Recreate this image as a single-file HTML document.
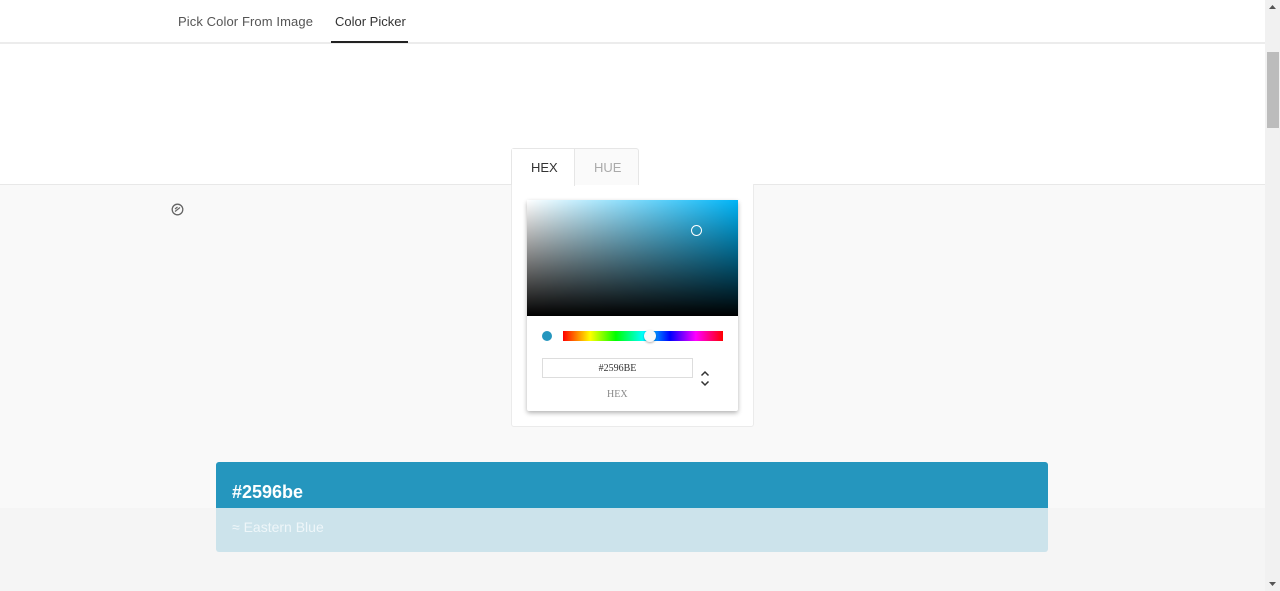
<!DOCTYPE html>
<html><head><style>
body{margin:0;width:1280px;height:591px;overflow:hidden;position:relative;font-family:"Liberation Sans",sans-serif;background:#f5f5f5}
.a{position:absolute}
</style></head><body>
<div class="a" style="left:0;top:0;width:1265px;height:185px;background:#fff"></div>
<div class="a" style="left:0;top:42px;width:1265px;height:2px;background:#ececec"></div>
<div class="a" style="left:0;top:184px;width:1265px;height:1px;background:#e8e8e8"></div>
<div class="a" style="left:0;top:185px;width:1265px;height:323px;background:#f9f9f9"></div>
<div class="a" style="left:178px;top:14px;font-size:13px;color:#555;letter-spacing:0.1px">Pick Color From Image</div>
<div class="a" style="left:335px;top:14px;font-size:13px;color:#333">Color Picker</div>
<div class="a" style="left:331px;top:41px;width:77px;height:2px;background:#222"></div>
<svg class="a" style="left:171px;top:203px" width="13" height="13" viewBox="0 0 13 13"><circle cx="6.5" cy="6.5" r="5.3" fill="none" stroke="#666" stroke-width="1.3"/><path d="M4 8.5L9 4.5M4 6L6.5 4" stroke="#666" stroke-width="1.2" fill="none"/></svg>
<div class="a" style="left:511px;top:184px;width:241px;height:242px;background:#fff;border:1px solid #ebebeb;border-top:none;border-radius:0 0 3px 3px"></div>
<div class="a" style="left:511px;top:148px;width:126px;height:36px;border:1px solid #e6e6e6;border-bottom:none;border-radius:3px 3px 0 0;background:#fafafa"></div>
<div class="a" style="left:512px;top:149px;width:62px;height:37px;background:#fff;border-right:1px solid #e6e6e6"></div>
<div class="a" style="left:531px;top:160px;font-size:13px;color:#333">HEX</div>
<div class="a" style="left:594px;top:160px;font-size:13px;color:#aaa">HUE</div>
<div class="a" style="left:527px;top:200px;width:211px;height:211px;background:#fff;box-shadow:0 2px 5px rgba(0,0,0,.3);border-radius:2px"></div>
<div class="a" style="left:527px;top:200px;width:211px;height:116px;background:linear-gradient(to top,#000,transparent),linear-gradient(to right,#fff,#00b4f6)"></div>
<div class="a" style="left:691px;top:225px;width:9px;height:9px;border:1.5px solid #fff;border-radius:50%"></div>
<div class="a" style="left:542px;top:331px;width:10px;height:10px;border-radius:50%;background:#2596be"></div>
<div class="a" style="left:563px;top:331px;width:160px;height:10px;background:linear-gradient(to right,#f00,#ff0 17%,#0f0 33%,#0ff 50%,#00f 67%,#f0f 83%,#f00)"></div>
<div class="a" style="left:644px;top:330px;width:12px;height:12px;border-radius:50%;background:#f8f8f8;box-shadow:0 1px 2px rgba(0,0,0,.3)"></div>
<div class="a" style="left:542px;top:358px;width:149px;height:18px;border:1px solid #ddd;font-family:'Liberation Serif',serif;font-size:10px;text-align:center;line-height:20px;color:#333">#2596BE</div>
<div class="a" style="left:607px;top:389px;font-family:'Liberation Serif',serif;font-size:10px;color:#888">HEX</div>
<svg class="a" style="left:700px;top:370px" width="10" height="18" viewBox="0 0 10 18"><path d="M1.5 5.5L5 2L8.5 5.5M1.5 11.5L5 15L8.5 11.5" stroke="#333" stroke-width="1.5" fill="none"/></svg>
<div class="a" style="left:216px;top:462px;width:832px;height:90px;border-radius:3px;overflow:hidden;background:#cce3eb">
<div style="height:46px;background:#2596be"></div></div>
<div class="a" style="left:232px;top:482px;font-size:18px;font-weight:bold;color:#fff">#2596be</div>
<div class="a" style="left:232px;top:519px;font-size:14px;color:#eef6f9">≈ Eastern Blue</div>
<div class="a" style="left:1265px;top:0;width:15px;height:591px;background:#f1f1f1"></div>
<div class="a" style="left:1267px;top:52px;width:12px;height:76px;background:#bcbcbc"></div>
<svg class="a" style="left:1265px;top:0" width="15" height="591"><path d="M4 9L7.5 5L11 9Z" fill="#555"/><path d="M4 582L7.5 586L11 582Z" fill="#555"/></svg>
</body></html>
